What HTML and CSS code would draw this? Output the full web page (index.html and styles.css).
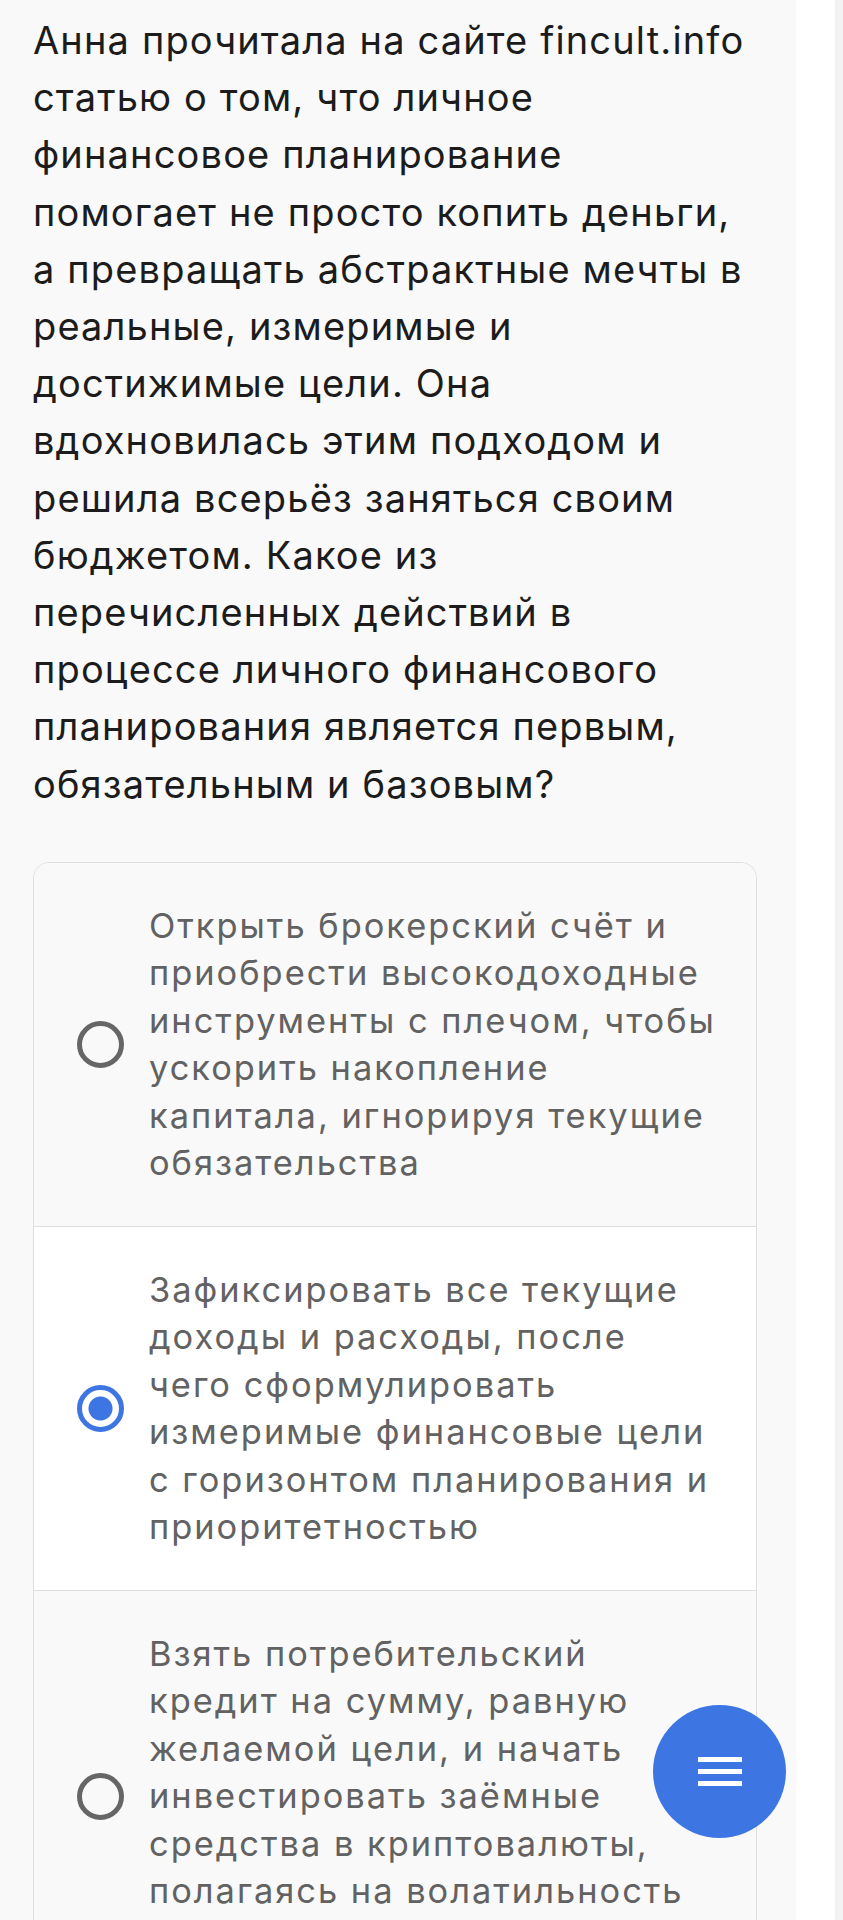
FILE: index.html
```html
<!DOCTYPE html>
<html lang="ru">
<head>
<meta charset="utf-8">
<title>Вопрос</title>
<link rel="stylesheet" href="styles.css">
</head>
<body>
<div class="page">
  <main class="panel">
    <p class="question">Анна прочитала на сайте fincult.info статью о том, что личное финансовое планирование помогает не просто копить деньги, а превращать абстрактные мечты в реальные, измеримые и достижимые цели. Она вдохновилась этим подходом и решила всерьёз заняться своим бюджетом. Какое из перечисленных действий в процессе личного финансового планирования является первым, обязательным и базовым?</p>
    <div class="options">
      <label class="option">
        <span class="radio"></span>
        <span class="option-text">Открыть брокерский счёт и приобрести высокодоходные инструменты с плечом, чтобы ускорить накопление капитала, игнорируя текущие обязательства</span>
      </label>
      <label class="option option-selected">
        <span class="radio radio-checked"></span>
        <span class="option-text">Зафиксировать все текущие доходы и расходы, после чего сформулировать измеримые финансовые цели с горизонтом планирования и приоритетностью</span>
      </label>
      <label class="option">
        <span class="radio"></span>
        <span class="option-text">Взять потребительский кредит на сумму, равную желаемой цели, и начать инвестировать заёмные средства в криптовалюты, полагаясь на волатильность рынка</span>
      </label>
    </div>
  </main>
  <div class="gutter"></div>
  <div class="scrolltrack"></div>
</div>
<button class="fab" type="button" aria-label="Меню">
  <svg width="44" height="29" viewBox="0 0 44 29"><rect x="0" y="0" width="44" height="5" fill="#fff"/><rect x="0" y="12" width="44" height="5" fill="#fff"/><rect x="0" y="24" width="44" height="5" fill="#fff"/></svg>
</button>
</body>
</html>
```

FILE: styles.css
```css
html, body {
  margin: 0;
  padding: 0;
  background: #ffffff;
}
body {
  font-family: Inter, "Noto Sans", sans-serif;
  height: 1920px;
  overflow: hidden;
}
.page {
  display: flex;
  min-height: 1920px;
}
.panel {
  width: 796px;
  box-sizing: border-box;
  padding: 12px 39px 0 33px;
  background: #f9f9f9;
  flex: none;
}
.gutter {
  width: 39px;
  flex: none;
}
.scrolltrack {
  flex: 1;
  background: #f3f3f3;
}
.question {
  margin: 0 6px 0 0;
  font-size: 38px;
  line-height: 57.2px;
  color: #1c1c1c;
  letter-spacing: 1.15px;
}
.options {
  margin-top: 49px;
  border: 1px solid #dfdfdf;
  border-radius: 16px;
  overflow: hidden;
}
.option {
  display: flex;
  align-items: center;
  gap: 25px;
  padding: 39px 37px 39px 43px;
  background: #f9f9f9;
}
.option + .option {
  border-top: 1px solid #dfdfdf;
}
.option-selected {
  background: #ffffff;
}
.radio {
  flex: none;
  width: 47px;
  height: 47px;
  box-sizing: border-box;
  border: 5px solid #666666;
  border-radius: 50%;
}
.radio-checked {
  border-color: #3d76e3;
  background: radial-gradient(circle, #3d76e3 0 11.5px, #ffffff 12.5px);
}
.option-text {
  font-size: 34.4px;
  line-height: 47.5px;
  color: #626262;
  letter-spacing: 2px;
}
.fab {
  position: fixed;
  left: 653px;
  top: 1705px;
  width: 133px;
  height: 133px;
  border-radius: 50%;
  border: none;
  padding: 0;
  background: #3d76e3;
  display: flex;
  align-items: center;
  justify-content: center;
  cursor: pointer;
}
```
